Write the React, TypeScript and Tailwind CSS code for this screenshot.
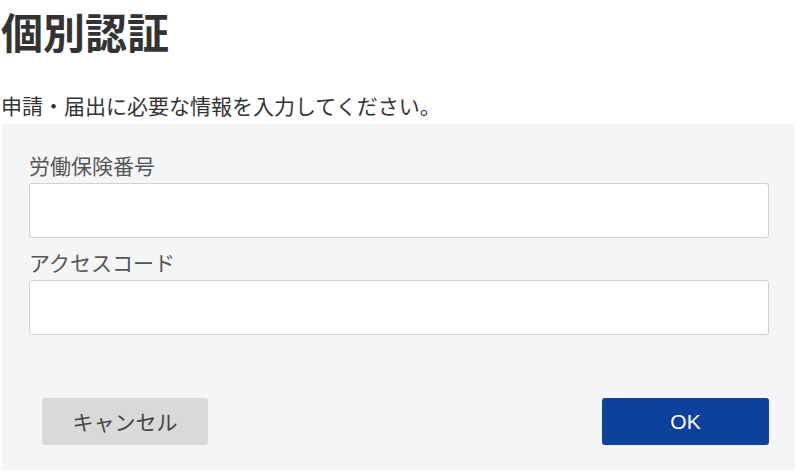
import React from "react";

export default function App() {
  return (
    <div
      className="w-[800px] h-[475px] bg-white overflow-hidden"
      style={{ fontFamily: '"Noto Sans CJK JP", "Noto Sans", sans-serif' }}
    >
      <h1 className="pl-[1px] pt-[8px] text-[42px] leading-[46px] font-bold text-[#333333]">
        個別認証
      </h1>
      <p className="mt-[39px] pl-[1px] text-[21px] leading-[24px] text-[#333333]">
        申請・届出に必要な情報を入力してください。
      </p>
      <div className="ml-[2px] mt-[7px] w-[793px] h-[346px] bg-[#f4f5f7] pl-[27px] pr-[26px] pt-[26px]">
        <label className="block text-[21px] leading-[30px] text-[#555555]">
          労働保険番号
        </label>
        <input
          type="text"
          className="block mt-[3px] w-full h-[55px] bg-white border border-[#cfd0d3] rounded-[3px]"
        />
        <label className="block mt-[9px] text-[21px] leading-[30px] text-[#555555]">
          アクセスコード
        </label>
        <input
          type="text"
          className="block mt-[3px] w-full h-[55px] bg-white border border-[#cfd0d3] rounded-[3px]"
        />
        <div className="mt-[63px] flex justify-between">
          <button className="ml-[13px] w-[166px] h-[47px] bg-[#d9d9d9] rounded-[3px] text-[21px] text-[#444444]">
            キャンセル
          </button>
          <button
            className="w-[167px] h-[47px] bg-[#0e40a0] rounded-[3px] text-[21px] text-white"
            style={{ fontFamily: '"Liberation Sans", "Noto Sans CJK JP", sans-serif' }}
          >
            OK
          </button>
        </div>
      </div>
    </div>
  );
}
